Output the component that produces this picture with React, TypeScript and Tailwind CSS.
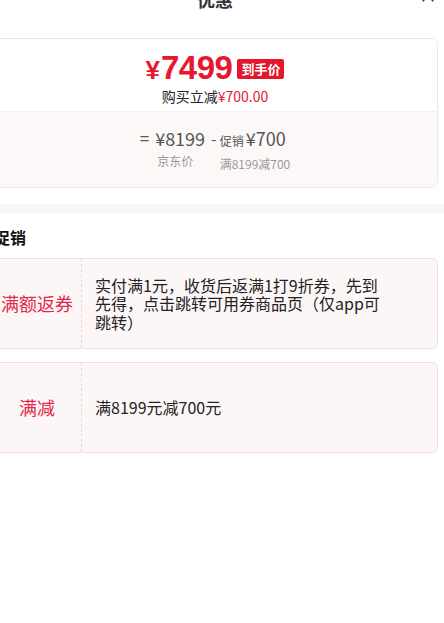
import { X } from "lucide-react";

const promos = [
  {
    label: "满额返券",
    text: "实付满1元，收货后返满1打9折券，先到先得，点击跳转可用券商品页（仅app可跳转）",
  },
  { label: "满减", text: "满8199元减700元" },
];

const PriceCard = () => {
  return (
    <div className="mt-[15px] rounded-[6px] border border-[#f1e5e7] overflow-hidden">
      <div className="h-[72px] bg-white flex flex-col items-center pt-[12px]">
        <div className="flex items-center">
          <span className="text-[#e8172f] font-bold text-[26px] leading-none font-['Liberation_Sans',sans-serif] mr-[1px] mt-[4px]">
            ¥
          </span>
          <span className="text-[#e8172f] font-bold text-[33px] leading-[34px] font-['Liberation_Sans',sans-serif] tracking-[-0.5px]">
            7499
          </span>
          <span className="ml-[5px] mt-[2px] bg-[#e6162c] text-white text-[13px] font-bold leading-[20px] px-[4px] rounded-[2px]">
            到手价
          </span>
        </div>
        <div className="text-[14px] leading-[18px] text-[#222] mt-[2px]">
          购买立减<span className="text-[#e8172f]">¥700.00</span>
        </div>
      </div>
      <div className="h-[76px] bg-[#fdf8f8] border-t border-[#f7ecee] flex justify-center pt-[14px] text-[#555]">
        <div className="flex items-start">
          <span className="text-[17px] leading-[24px] mr-[6px]">=</span>
          <div className="flex flex-col items-start">
            <span className="text-[18px] leading-[24px]">¥8199</span>
            <span className="text-[12px] leading-[16px] text-[#999] mt-[3px] ml-[2px]">京东价</span>
          </div>
          <span className="text-[16px] leading-[24px] mx-[6px]">-</span>
          <div className="flex flex-col items-start -ml-[3px]">
            <span className="leading-[24px]">
              <span className="text-[12px] mr-[2px]">促销</span>
              <span className="text-[18px]">¥700</span>
            </span>
            <span className="text-[12px] leading-[16px] text-[#999] mt-[3px]">满8199减700</span>
          </div>
        </div>
      </div>
    </div>
  );
};

export default function App() {
  return (
    <div className="w-[444px] h-[623px] overflow-hidden bg-white font-['Noto_Sans_CJK_SC','Noto_Sans',sans-serif]">
      <div className="-ml-[18px] w-[466px] px-[10px]">
        <div className="relative -mt-[25px] h-[48px] flex items-center justify-center">
          <span className="text-[18px] font-bold text-[#333] leading-[24px]">优惠</span>
          <X className="absolute right-[0px] top-[11px] w-[20px] h-[20px] text-[#333]" strokeWidth={1.6} />
        </div>
        <div className="mt-[1px]">
          <PriceCard />
        </div>
      </div>
      <div className="mt-[16px] h-[9px] bg-[#f6f6f9]" />
      <div className="-ml-[18px] w-[466px] px-[10px]">
        <h2 className="mt-[13px] pl-[2px] text-[16px] font-bold leading-[22px] text-[#111]">促销</h2>
        <div className="mt-[10px] flex flex-col gap-[13px]">
          {promos.map((p) => (
            <div
              key={p.label}
              className="flex min-h-[91px] rounded-[6px] border border-[#f0dfe2] bg-[#fdf6f7]"
            >
              <div className="w-[89px] shrink-0 flex items-center justify-center border-r border-dashed border-[#efd3d8] text-[18px] text-[#e0284a]">
                {p.label}
              </div>
              <div className="flex-1 flex items-center pl-[13px] pr-[55px] py-[16px] text-[16px] leading-[18.5px] text-[#222]">
                {p.text}
              </div>
            </div>
          ))}
        </div>
      </div>
    </div>
  );
}
